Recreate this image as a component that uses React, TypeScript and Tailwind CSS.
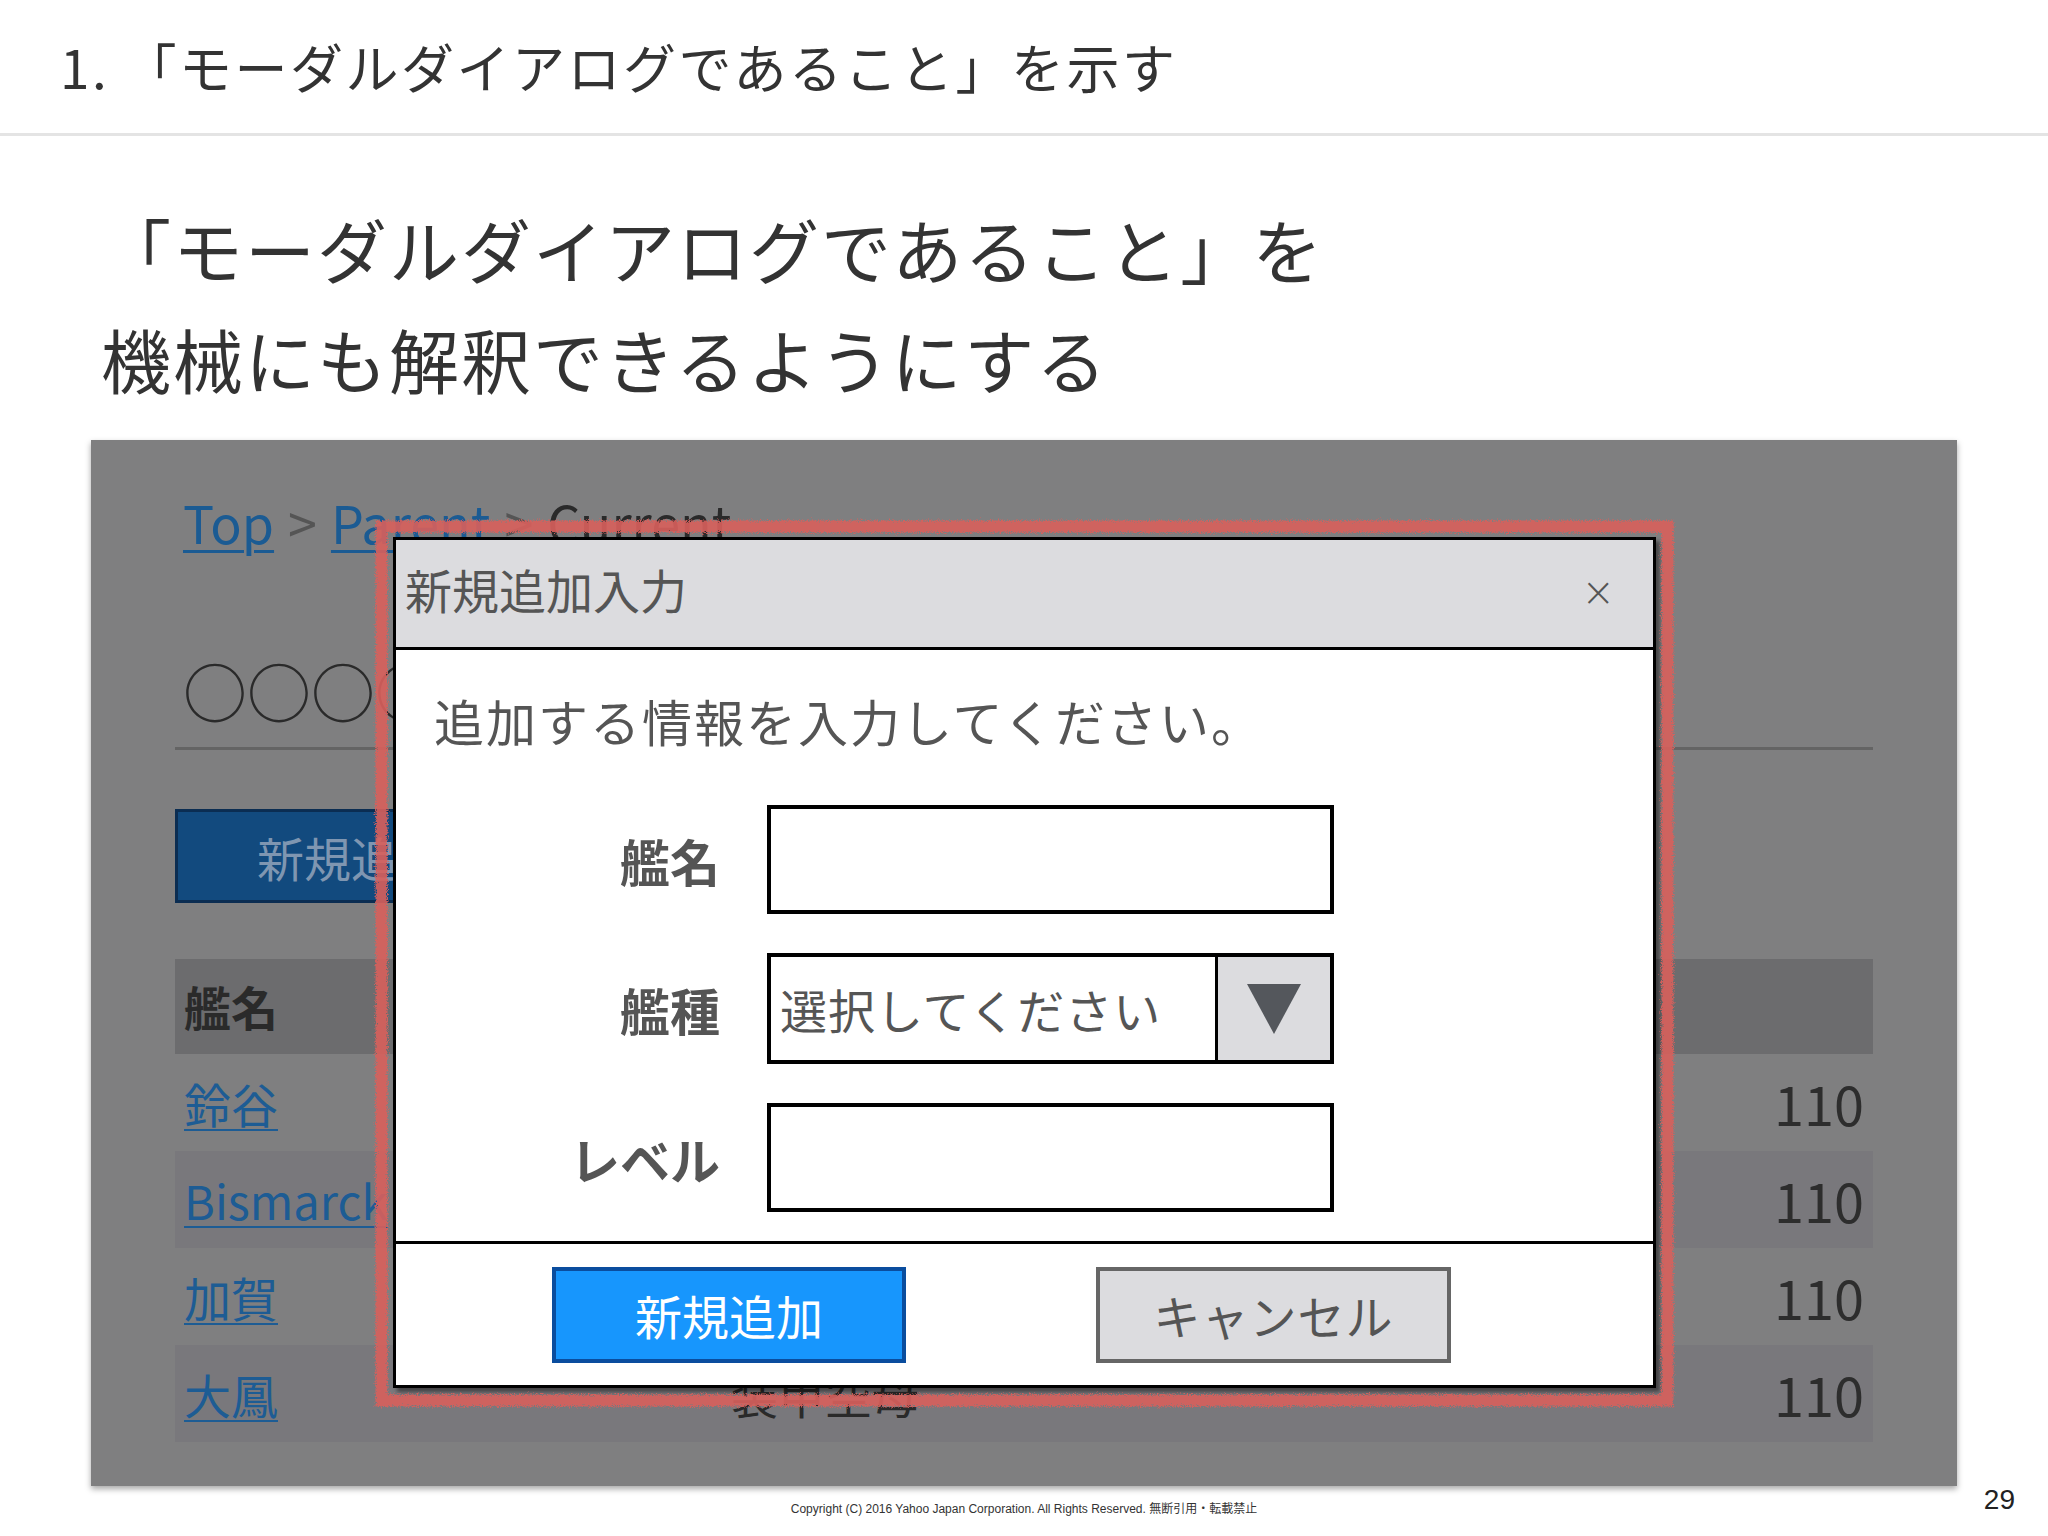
import React from "react";

const rows = [
  { name: "鈴谷", type: "航空巡洋艦", level: "110" },
  { name: "Bismarck", type: "戦艦", level: "110" },
  { name: "加賀", type: "正規空母", level: "110" },
  { name: "大鳳", type: "装甲空母", level: "110" },
];

export default function App() {
  return (
    <div className="relative w-[2048px] h-[1536px] bg-white overflow-hidden font-['Noto_Sans_CJK_JP',sans-serif] text-[#333]">
      {/* slide title */}
      <div className="h-[136px] flex items-center pl-[60px] border-b-[3px] border-[#e4e4e4]">
        <span className="text-[53px] leading-none tracking-[2.5px] text-[#333]">1.&nbsp;「モーダルダイアログであること」を示す</span>
      </div>

      {/* heading */}
      <div className="mt-[58px] pl-[101px] text-[70px] leading-[110px] tracking-[2px] text-[#333]">
        <div>「モーダルダイアログであること」を</div>
        <div>機械にも解釈できるようにする</div>
      </div>

      {/* dimmed page */}
      <div className="relative mt-[26px] ml-[91px] w-[1866px] h-[1046px] bg-[#7f7f80] shadow-[0_3px_6px_rgba(0,0,0,0.35)] px-[84px] pt-[50px]">
        <div className="h-[64px] pl-[8px] flex items-center gap-[14px] text-[52px] leading-none">
          <span className="text-[#1b5b93] underline decoration-[3px] underline-offset-[6px]">Top</span>
          <span className="text-[#555]">&gt;</span>
          <span className="text-[#1b5b93] underline decoration-[3px] underline-offset-[6px]">Parent</span>
          <span className="text-[#555]">&gt;</span>
          <span className="text-[#2a2a2a]">Current</span>
        </div>

        <div className="mt-[95px] h-[101px] pl-[8px] flex items-start border-b-[3px] border-[#646464]">
          <span className="text-[64px] leading-[80px] text-[#2a2a2a]">○○○○一覧</span>
        </div>

        <div className="mt-[59px] w-[320px] h-[94px] bg-[#124a7e] border-[3px] border-[#0b2d52] flex items-center pl-[79px]">
          <span className="text-[47px] leading-none text-[#7f96b1]">新規追加</span>
        </div>

        <div className="mt-[56px]">
          <div className="h-[95px] bg-[#6c6c6e] grid grid-cols-[547px_1fr_auto] items-center px-[9px] text-[47px] font-bold text-[#2a2a2a]">
            <span>艦名</span>
            <span>艦種</span>
            <span />
          </div>
          {rows.map((r, i) => (
            <div
              key={r.name}
              className={
                "h-[97px] grid grid-cols-[547px_1fr_auto] items-center px-[9px] " +
                (i % 2 === 1 ? "bg-[#79787c]" : "bg-[#7f7f80]")
              }
            >
              <span className="text-[47px] leading-none text-[#1d5c94] underline decoration-[2px] underline-offset-[6px]">{r.name}</span>
              <span className="text-[47px] leading-none text-[#2a2a2a]">{r.type}</span>
              <span className="text-[54px] leading-none text-[#2d2d2d]">{r.level}</span>
            </div>
          ))}
        </div>

        {/* modal */}
        <div className="absolute left-[302px] top-[97px] w-[1263px] h-[851px] bg-white border-[3px] border-black shadow-[4px_4px_4px_rgba(0,0,0,0.45)] flex flex-col">
          <div className="h-[110px] shrink-0 bg-[#dcdcdf] border-b-[3px] border-black flex items-center justify-between pl-[9px] pr-[38px] pb-[10px]">
            <span className="text-[47px] leading-none text-[#555]">新規追加入力</span>
            <span className="mt-[6px] text-[40px] leading-none text-[#555] font-['DejaVu_Sans',sans-serif] font-extralight">×</span>
          </div>
          <div className="h-[594px] shrink-0 border-b-[3px] border-black">
            <div className="mt-[35px] h-[70px] flex items-center pl-[38px]">
              <span className="text-[50px] leading-none tracking-[2px] text-[#555]">追加する情報を入力してください。</span>
            </div>
            <div className="mt-[50px] flex flex-col gap-[39px]">
              <div className="flex items-center h-[109px]">
                <span className="w-[324px] text-right text-[50px] font-bold text-[#555] leading-none">艦名</span>
                <div className="ml-[47px] w-[567px] h-[109px] border-[4px] border-black bg-white" />
              </div>
              <div className="flex items-center h-[111px]">
                <span className="w-[324px] text-right text-[50px] font-bold text-[#555] leading-none">艦種</span>
                <div className="ml-[47px] w-[567px] h-[111px] border-[4px] border-black bg-white flex">
                  <div className="flex-1 flex items-center pl-[9px]">
                    <span className="text-[47px] leading-none tracking-[1px] text-[#555]">選択してください</span>
                  </div>
                  <div className="w-[115px] bg-[#dcdcdf] border-l-[3px] border-black flex items-center justify-center">
                    <svg width="54" height="50" viewBox="0 0 54 50">
                      <polygon points="0,0 54,0 27,50" fill="#54575c" />
                    </svg>
                  </div>
                </div>
              </div>
              <div className="flex items-center h-[109px]">
                <span className="w-[324px] text-right text-[50px] font-bold text-[#555] leading-none">レベル</span>
                <div className="ml-[47px] w-[567px] h-[109px] border-[4px] border-black bg-white" />
              </div>
            </div>
          </div>
          <div className="flex-1 flex items-center pl-[156px] gap-[190px]">
            <div className="w-[354px] h-[96px] bg-[#1796fd] border-[4px] border-[#0a4d9e] flex items-center justify-center">
              <span className="text-[47px] leading-none text-white">新規追加</span>
            </div>
            <div className="w-[355px] h-[96px] bg-[#dcdcdf] border-[4px] border-[#666] flex items-center justify-center">
              <span className="text-[47px] leading-none tracking-[1px] text-[#555]">キャンセル</span>
            </div>
          </div>
        </div>

        {/* red annotation */}
        <svg className="absolute left-[274px] top-[70px] pointer-events-none opacity-90" width="1319" height="907">
          <defs>
            <filter id="rough" x="-2%" y="-2%" width="104%" height="104%">
              <feTurbulence type="fractalNoise" baseFrequency="0.9" numOctaves="2" seed="4" result="noise" />
              <feDisplacementMap in="SourceGraphic" in2="noise" scale="8" xChannelSelector="R" yChannelSelector="G" />
            </filter>
          </defs>
          <rect x="16.5" y="16.5" width="1286" height="874" fill="none" stroke="#d8605c" strokeWidth="12" filter="url(#rough)" />
        </svg>
      </div>

      {/* footer */}
      <div className="relative h-[50px]">
        <div className="pt-[15px] text-center text-[12px] leading-[16px] text-[#333] font-['Liberation_Sans','Noto_Sans_CJK_JP',sans-serif]">
          Copyright (C) 2016 Yahoo Japan Corporation. All Rights Reserved. 無断引用・転載禁止
        </div>
        <div className="absolute right-[33px] top-[-2px] text-[28px] leading-[32px] text-[#222] font-['Liberation_Sans',sans-serif]">29</div>
      </div>
    </div>
  );
}
